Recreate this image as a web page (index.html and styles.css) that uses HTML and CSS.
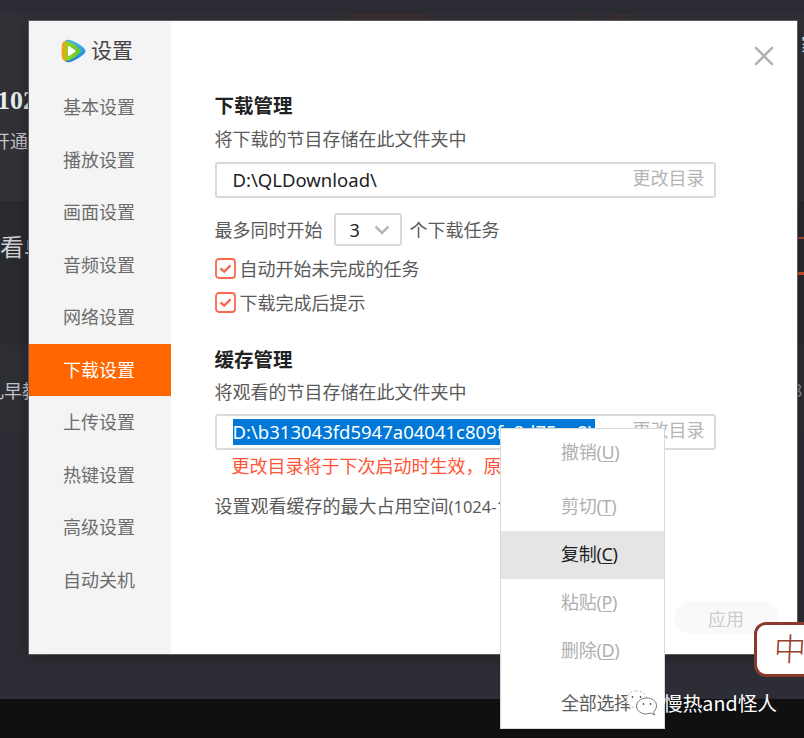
FILE: index.html
```html
<!DOCTYPE html>
<html lang="zh-CN">

<head>
    <meta charset="UTF-8">
    <title>设置</title>
    <link rel="stylesheet" href="styles.css">
</head>

<body>
    <div class="backdrop">
        <div class="band titlebar"></div>
        <div class="band banner">
            <i class="glow"></i><i class="glow small"></i><i class="glow right"></i>
            <div class="banner-title">102</div>
            <div class="banner-sub">开通</div>
            <span class="edge-char">家</span>
        </div>
        <div class="band promo">
            <div class="promo-title">看单</div>
            <i class="edge-line thin"></i>
            <i class="edge-line"></i>
        </div>
        <div class="band channel">
            <span class="channel-name">儿早教</span>
            <span class="channel-num">8</span>
        </div>
        <div class="band blank"></div>
        <div class="band taskbar"></div>
    </div>

    <div class="dialog">
        <aside class="sidebar">
            <header class="brand">
                <svg class="logo" viewBox="0 0 25 24">
                    <defs>
                        <linearGradient id="blue" x1="0" y1="0" x2="0" y2="1">
                            <stop offset="0" stop-color="#48b4f4" />
                            <stop offset="1" stop-color="#1b7fdc" />
                        </linearGradient>
                        <linearGradient id="green" x1="0" y1="0" x2="1" y2="0">
                            <stop offset="0" stop-color="#f6a21a" />
                            <stop offset="0.3" stop-color="#8ed321" />
                            <stop offset="1" stop-color="#5cc43a" />
                        </linearGradient>
                    </defs>
                    <path d="M3 4Q4 0 9 1Q16 3 23 9Q26 12 23 15Q16 21 9 23Q4 24 3 20Z" fill="url(#blue)" />
                    <path d="M1 5Q2 2 5 2L7 12L5 22Q2 22 1 19Q0 12 1 5Z" fill="#ff9716" />
                    <path d="M2 5Q4 1 9 3Q14 5 19 10Q21 12 19 14Q14 19 9 21Q4 23 2 19Q1 12 2 5Z" fill="url(#green)" />
                    <path d="M7 8Q7 7 8 7L14 11Q15 12 14 13L8 17Q7 17 7 16Z" fill="#fff" />
                </svg>
                <h1>设置</h1>
            </header>
            <nav class="menu">
                <a>基本设置</a>
                <a>播放设置</a>
                <a>画面设置</a>
                <a>音频设置</a>
                <a>网络设置</a>
                <a class="active">下载设置</a>
                <a>上传设置</a>
                <a>热键设置</a>
                <a>高级设置</a>
                <a>自动关机</a>
            </nav>
        </aside>

        <main class="content">
            <div class="close-row">
                <svg class="close" viewBox="0 0 20 20">
                    <path d="M2 2L18 18M18 2L2 18" />
                </svg>
            </div>

            <section class="download">
                <h2>下载管理</h2>
                <p>将下载的节目存储在此文件夹中</p>
                <div class="path-box">
                    <span class="path">D:\QLDownload\</span>
                    <span class="change">更改目录</span>
                </div>
                <div class="tasks">
                    <span>最多同时开始</span>
                    <div class="select">
                        <span>3</span>
                        <svg viewBox="0 0 16 10">
                            <path d="M1.5 1.5L8 8L14.5 1.5" />
                        </svg>
                    </div>
                    <span>个下载任务</span>
                </div>
                <label class="check">
                    <svg viewBox="0 0 21 21">
                        <rect x="1" y="1" width="19" height="19" rx="3" />
                        <path class="tick" d="M5.5 10.3L9.2 13.6L15.5 7.4" />
                    </svg>
                    <span>自动开始未完成的任务</span>
                </label>
                <label class="check">
                    <svg viewBox="0 0 21 21">
                        <rect x="1" y="1" width="19" height="19" rx="3" />
                        <path class="tick" d="M5.5 10.3L9.2 13.6L15.5 7.4" />
                    </svg>
                    <span>下载完成后提示</span>
                </label>
            </section>

            <section class="cache">
                <h2>缓存管理</h2>
                <p>将观看的节目存储在此文件夹中</p>
                <div class="path-box">
                    <span class="path selected">D:\b313043fd5947a04041c809fa8d75ee2\</span>
                    <span class="change">更改目录</span>
                </div>
                <p class="warning">更改目录将于下次启动时生效，原</p>
                <p class="limit">设置观看缓存的最大占用空间<span>(1024-1</span></p>
            </section>

            <button class="apply">应用</button>
        </main>
    </div>

    <ul class="context-menu">
        <li>撤销(<u>U</u>)</li>
        <li class="divider"></li>
        <li>剪切(<u>T</u>)</li>
        <li class="current">复制(<u>C</u>)</li>
        <li>粘贴(<u>P</u>)</li>
        <li>删除(<u>D</u>)</li>
        <li class="divider"></li>
        <li class="enabled">全部选择</li>
    </ul>

    <div class="ime"><span>中</span></div>

    <div class="watermark">
        <svg viewBox="0 0 32 28">
            <path class="fill" d="M11 2C5 2 1 6 1 10C1 13 3 15 5 17L4 20L8 18C13 19 20 17 21 10C21 5 17 2 11 2Z" />
            <path class="fill front" d="M21 9C15 9 11 13 11 17C11 22 16 25 21 25L25 24L29 26L28 23C30 21 31 19 31 17C31 12 27 9 21 9Z" />
            <circle cx="7" cy="8" r="0.8" /><circle cx="15" cy="8" r="0.8" />
            <circle cx="18" cy="15" r="0.8" /><circle cx="25" cy="15" r="0.8" />
        </svg>
        <span>慢热and怪人</span>
    </div>
</body>

</html>
```
FILE: styles.css
```css
* {
    box-sizing: border-box;
}

body {
    margin: 0;
    width: 804px;
    height: 738px;
    position: relative;
    overflow: hidden;
    font-family: "Noto Sans", "Noto Sans CJK SC", sans-serif;
    font-size: 18px;
    color: #5a5a5a;
}

h1, h2, p, ul {
    margin: 0;
    padding: 0;
    font-weight: normal;
}

/* player window behind the dialog */
.backdrop {
    height: 738px;
    display: flex;
    flex-direction: column;
    color: #c4c4c8;
    white-space: nowrap;
}

.band {
    position: relative;
    overflow: hidden;
}

.titlebar {
    height: 13px;
    background: #2c2c34;
}

.banner {
    height: 188px;
    background: #313137;
    padding-top: 70px;
}

.banner-title {
    font: bold 26px/36px "Liberation Serif", serif;
    color: #e6eef4;
    margin-left: -3px;
}

.banner-sub {
    margin: 8px 0 0 -8px;
    line-height: 28px;
}

.glow {
    position: absolute;
    top: 0;
    left: 346px;
    width: 82px;
    height: 8px;
    background: #3c3134;
    border-radius: 20px 20px 0 0;
}

.glow.small {
    left: 581px;
    width: 8px;
    border-radius: 0;
}

.glow.right {
    left: 612px;
    width: 20px;
}

.edge-char {
    position: absolute;
    left: 801px;
    top: 18px;
    line-height: 26px;
    color: #e6eef4;
}

.promo {
    height: 144px;
    background: #2a2a31;
    padding-top: 28px;
}

.promo-title {
    font-size: 24px;
    line-height: 36px;
    color: #d0d0d3;
}

.edge-line {
    position: absolute;
    right: 0;
    top: 71px;
    width: 8px;
    height: 3px;
    background: #d04f2c;
}

.edge-line.thin {
    top: 36px;
    width: 6px;
    height: 2px;
    background: #a94a32;
}

.channel {
    height: 87px;
    background: #2e2e35;
    padding-top: 32px;
}

.channel-name {
    display: block;
    margin-left: -14px;
    line-height: 28px;
}

.channel-num {
    position: absolute;
    left: 792px;
    top: 33px;
    color: #8a8a8e;
}

.blank {
    flex: 1;
    background: #2d2d35;
}

.taskbar {
    height: 39px;
    background: #101012;
}

/* settings dialog */
.dialog {
    position: absolute;
    left: 29px;
    top: 21px;
    width: 768px;
    height: 633px;
    display: flex;
    background: #fff;
    box-shadow: 0 0 0 1px #5c5c60, 0 2px 16px rgba(0, 0, 0, 0.35);
}

.sidebar {
    width: 142px;
    background: #f4f4f4;
}

.brand {
    display: flex;
    align-items: center;
    gap: 5px;
    height: 60px;
    padding-left: 32px;
}

.brand .logo {
    width: 25px;
    height: 24px;
    margin-top: -1px;
}

.brand h1 {
    font-size: 21px;
    line-height: 30px;
    margin-top: -2px;
    color: #444;
}

.menu {
    display: flex;
    flex-direction: column;
}

.menu a {
    height: 52.5px;
    padding-left: 34px;
    line-height: 52px;
    color: #6c6c6c;
}

.menu .active {
    background: #ff6600;
    color: #fff;
}

.content {
    flex: 1;
    display: flex;
    flex-direction: column;
    padding: 24px 22px 0 43px;
}

.close-row {
    display: flex;
    justify-content: flex-end;
    height: 47px;
}

.close {
    width: 22px;
    height: 22px;
    fill: none;
    stroke: #b0b0b0;
    stroke-width: 2.3;
}

section {
    width: 501px;
    margin-left: 0.5px;
}

h2 {
    font-size: 19.5px;
    font-weight: bold;
    line-height: 28px;
    color: #222;
}

section p {
    line-height: 28px;
    margin-top: 5px;
    white-space: nowrap;
}

.path-box {
    display: flex;
    justify-content: space-between;
    height: 36px;
    margin-top: 9px;
    padding: 0 9px 0 16px;
    border: 2px solid #dadada;
    border-radius: 3px;
    line-height: 26px;
}

.path {
    align-self: center;
    font-size: 18.5px;
    color: #222;
}

.path.selected {
    width: 362px;
    background: #0078d7;
    color: #fff;
    white-space: nowrap;
    overflow: hidden;
}

.change {
    color: #b4b4b4;
    line-height: 28px;
}

.tasks {
    display: flex;
    align-items: center;
    height: 33px;
    margin-top: 15px;
}

.tasks > span {
    margin-top: -1px;
}

.select {
    display: flex;
    align-items: center;
    justify-content: space-between;
    width: 68px;
    height: 33px;
    margin: 0 8px 0 11px;
    padding: 0 10px 0 14px;
    border: 2px solid #dadada;
    border-radius: 3px;
    color: #222;
}

.select svg {
    width: 16px;
    height: 10px;
    fill: none;
    stroke: #b8b8b8;
    stroke-width: 2.5;
}

.check {
    display: flex;
    align-items: center;
    gap: 4px;
    height: 34px;
}

.tasks + .check {
    margin-top: 5px;
}

.check svg {
    width: 21px;
    height: 21px;
    fill: none;
    stroke: #f9694f;
    stroke-width: 1.8;
}

.check .tick {
    stroke-width: 2.4;
}

.cache {
    margin-top: 27px;
}

.cache p {
    margin-top: 4px;
}

.cache .path-box {
    margin-top: 8px;
}

.cache .warning {
    margin: 2px 0 0 17px;
    color: #ff5436;
}

.cache .limit {
    margin-top: 12px;
}

.limit span {
    font-size: 16.5px;
}

.apply {
    align-self: flex-end;
    width: 104px;
    height: 33px;
    margin: 80px -3px 0 0;
    padding: 0;
    border: none;
    border-radius: 17px;
    background: #f9f9f9;
    color: #cdcdcd;
    font: inherit;
}

/* right click menu over the path box */
.context-menu {
    position: absolute;
    left: 500px;
    top: 428px;
    width: 165px;
    height: 301px;
    border: 1px solid #d9d9d9;
    background: #fff;
    list-style: none;
}

.context-menu li {
    height: 48px;
    padding-left: 60px;
    line-height: 47px;
    letter-spacing: -0.3px;
    color: #b0b0b0;
}

.context-menu .divider {
    height: 5.5px;
}

.context-menu .current {
    background: #e5e5e5;
    color: #222;
}

.context-menu .enabled {
    color: #5c5c5c;
}

.context-menu u {
    text-underline-offset: 2px;
}

.ime {
    position: absolute;
    left: 754px;
    top: 622px;
    width: 72px;
    height: 55px;
    padding-left: 17px;
    border: 3px solid #8b392e;
    border-radius: 12px;
    background: #fff;
    color: #94402f;
    font-size: 32px;
    font-weight: 300;
    line-height: 48px;
}

.ime span {
    display: inline-block;
    transform: skewX(-3deg);
}

.watermark {
    position: absolute;
    left: 625px;
    top: 687px;
    display: flex;
    align-items: center;
    gap: 5px;
    color: #fff;
    font-family: "Noto Sans CJK SC", sans-serif;
    font-size: 19.7px;
    line-height: 29px;
    white-space: nowrap;
}

.watermark svg {
    width: 33px;
    height: 28px;
    margin-top: 2px;
}

.watermark .fill {
    fill: #fff;
    stroke: #aaa;
    stroke-width: 0.8;
    stroke-dasharray: 2 2;
}

.watermark .front {
    stroke: #555;
    stroke-dasharray: none;
}
```
